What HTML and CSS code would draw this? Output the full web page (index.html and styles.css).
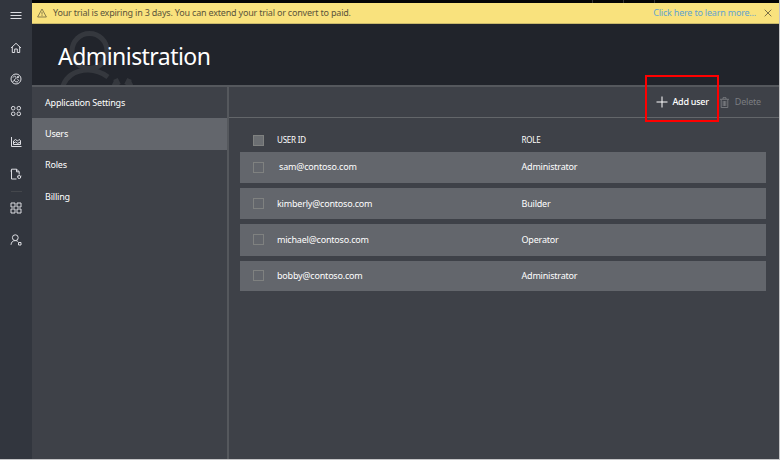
FILE: index.html
```html
<!DOCTYPE html>
<html lang="en">
<head>
<meta charset="utf-8">
<title>Administration</title>
<link rel="stylesheet" href="styles.css">
</head>
<body>
<div class="app">
  <nav class="rail">
    <svg class="icon menu" viewBox="0 0 12 12"><path d="M.5 2.500h11M.5 5.500h11M.5 8.500h11"/></svg>
    <svg class="icon" viewBox="0 0 12 12"><path d="M1 6l5-4.700L11 6M2.300 5v5.500h2.400V7h2.600v3.500h2.400V5"/></svg>
    <svg class="icon" viewBox="0 0 12 12"><circle cx="6" cy="6" r="5"/><path d="M2.300 9l2.500-2M7 5.300l1-1M3 4.500C4 2.500 6 3 6 4.500S4.500 6 4.500 7.300 6.500 9.200 8 8.800M7.300 6.300c1 .2 1.500.8 1.300 1.700"/><circle cx="8" cy="4" r=".7"/></svg>
    <svg class="icon" viewBox="0 0 12 12"><circle cx="3.200" cy="3.200" r="1.800"/><circle cx="8.800" cy="3.200" r="1.800"/><circle cx="3.200" cy="8.800" r="1.800"/><circle cx="8.800" cy="8.800" r="1.800"/></svg>
    <svg class="icon" viewBox="0 0 12 12"><path d="M1.500 1v9.500H11.500M3.500 8.500V5l2-1.500L7.500 5l1.500-1.500 1.500 1v4zM3.500 7l2-1 2 1.300 3-1"/></svg>
    <svg class="icon" viewBox="0 0 12 12"><path d="M6.500 11h-5V1.200h5.200l2.500 2.600V6M6.500 1.200v2.600h2.700M1.500 3H.5"/><circle cx="9.200" cy="9" r="1.500"/><path d="M9.200 6.500v1M7 8l.9.400M11.400 8l-.9.400"/></svg>
    <span class="rail-line"></span>
    <svg class="icon" viewBox="0 0 12 12"><path d="M1 1h4v4H1zM7 1h4v4H7zM1 7h4v4H1zM7 7h4v4H7z"/></svg>
    <svg class="icon" viewBox="0 0 12 12"><circle cx="5.300" cy="3.700" r="2.900"/><path d="M1 10.800c.3-2.500 1.600-4.200 4.200-4.200 1.500 0 2.300.5 3 1.300M8.500 8.500H11V11H8.500z"/></svg>
  </nav>
  <div class="main">
    <div class="strip"><i></i><i></i><i></i></div>
    <div class="banner">
      <svg class="warn" viewBox="0 0 10 10"><path d="M5 1L9.400 9H.6zM5 3.800v2.800M5 7.200v.9"/></svg>
      <span>Your trial is expiring in 3 days. You can extend your trial or convert to paid.</span>
      <a class="banner-link">Click here to learn more...</a>
      <svg class="close" viewBox="0 0 8 8"><path d="M.7.7l6.600 6.600M7.300.7L.7 7.300"/></svg>
    </div>
    <header class="header">
      <svg class="watermark" viewBox="0 0 80 61"><circle cx="29.500" cy="27" r="17.500"/><path d="M2 66C4 53 15 46 28 46c8 0 14 2.500 20 7"/><path d="M58.500 61l-3-6M66.500 61l3-6M53 58.500l6 3M72 58.500l-6 3"/></svg>
      <h1>Administration</h1>
    </header>
    <div class="body">
      <ul class="menu-list">
        <li>Application Settings</li>
        <li class="active">Users</li>
        <li>Roles</li>
        <li>Billing</li>
      </ul>
      <section class="content">
        <div class="toolbar">
          <button class="add"><svg class="plus" viewBox="0 0 12 12"><path d="M6 .5v11M.5 6h11"/></svg>Add user</button>
          <button class="del"><svg class="trash" viewBox="0 0 9 11"><path d="M0 2.300h9M3 2V.7h3V2M1.200 2.500v8h6.600v-8M3.200 4v5M4.500 4v5M5.800 4v5"/></svg>Delete</button>
          <span class="highlight"></span>
        </div>
        <div class="table">
          <div class="row head"><span class="box"></span><span>USER ID</span><span>ROLE</span></div>
          <div class="row first"><span class="box"></span><span>sam@contoso.com</span><span>Administrator</span></div>
          <div class="row"><span class="box"></span><span>kimberly@contoso.com</span><span>Builder</span></div>
          <div class="row"><span class="box"></span><span>michael@contoso.com</span><span>Operator</span></div>
          <div class="row last"><span class="box"></span><span>bobby@contoso.com</span><span>Administrator</span></div>
        </div>
      </section>
    </div>
  </div>
</div>
</body>
</html>
```
FILE: styles.css
```css
* { box-sizing: border-box; }
body { margin: 0; background: #c6c6c8; color: #fff; font-family: "Noto Sans", sans-serif; font-size: 9px; line-height: 12px; letter-spacing: -.2px; }
.app { display: flex; width: 779px; height: 459px; background: #3e4148; overflow: hidden; }
.rail { width: 32px; flex: none; background: #32363e; display: flex; flex-direction: column; align-items: center; padding-top: 10px; gap: 19.500px; }
.icon { width: 12px; height: 12px; flex: none; fill: none; stroke: #dcdde2; stroke-width: 1; }
.rail-line { width: 11px; height: 1px; background: #44474c; margin: -8.500px 0 -9px; flex: none; }
.main { flex: 1; min-width: 0; display: flex; flex-direction: column; }
.strip { height: 3px; flex: none; background: #050505; display: flex; padding-left: 560px; gap: 30px; }
.strip i { width: 1px; background: #343434; }
.banner { height: 21px; flex: none; background: #f9e27d; border-bottom: 1px solid #c9b96b; display: flex; align-items: center; padding: 0 7px 0 5px; color: #5b543b; }
.warn { width: 10px; height: 10px; margin-right: 6px; fill: none; stroke: #6d6440; stroke-width: .8; }
.banner-link { margin-left: auto; color: #63a3cf; }
.close { width: 8px; height: 8px; margin-left: 8px; fill: none; stroke: #6d6440; stroke-width: .9; }
.header { height: 61px; flex: none; background: #21242b; position: relative; overflow: hidden; }
.watermark { position: absolute; left: 28px; top: 0; width: 80px; height: 61px; fill: none; stroke: #35383e; stroke-width: 5; }
h1 { position: relative; margin: 0; padding: 16px 0 0 26px; font-size: 23px; line-height: 32px; font-weight: 400; letter-spacing: -.550px; }
.body { flex: 1; display: flex; border-top: 2px solid #55585d; }
.menu-list { width: 195px; margin: 0; padding: 0; list-style: none; }
.menu-list li { height: 31.300px; display: flex; align-items: center; padding-left: 13px; }
.active { background: #63666c; }
.content { flex: 1; border-left: 2px solid #55585d; }
.toolbar { height: 31px; border-bottom: 1px solid #63666a; display: flex; justify-content: flex-end; align-items: center; padding-right: 18px; gap: 11px; position: relative; }
button { all: unset; display: flex; align-items: center; }
.add { font-weight: 500; letter-spacing: -.250px; }
.plus { width: 12px; height: 12px; margin-right: 4px; fill: none; stroke: #fff; }
.del { color: #7b7d81; }
.trash { width: 9px; height: 11px; margin-right: 6px; fill: none; stroke: #7b7d81; stroke-width: .9; }
.highlight { position: absolute; left: 416px; top: -12px; width: 74px; height: 47px; border: 2px solid #f00; }
.table { padding: 16px 13px 0 11px; display: grid; gap: 5px; }
.row { height: 31.400px; display: grid; grid-template-columns: 13px 24px 244.500px 1fr; background: #63666c; align-items: center; }
.row > .box { grid-column: 2; }
.box { width: 11px; height: 11px; border: 1px solid #7f8180; }
.head { height: 12.500px; background: none; font-size: 8px; }
.head .box { background: #6b6e72; }
.first .box + span { padding-left: 2px; letter-spacing: -.170px; }
.last { height: 30.400px; }
```
